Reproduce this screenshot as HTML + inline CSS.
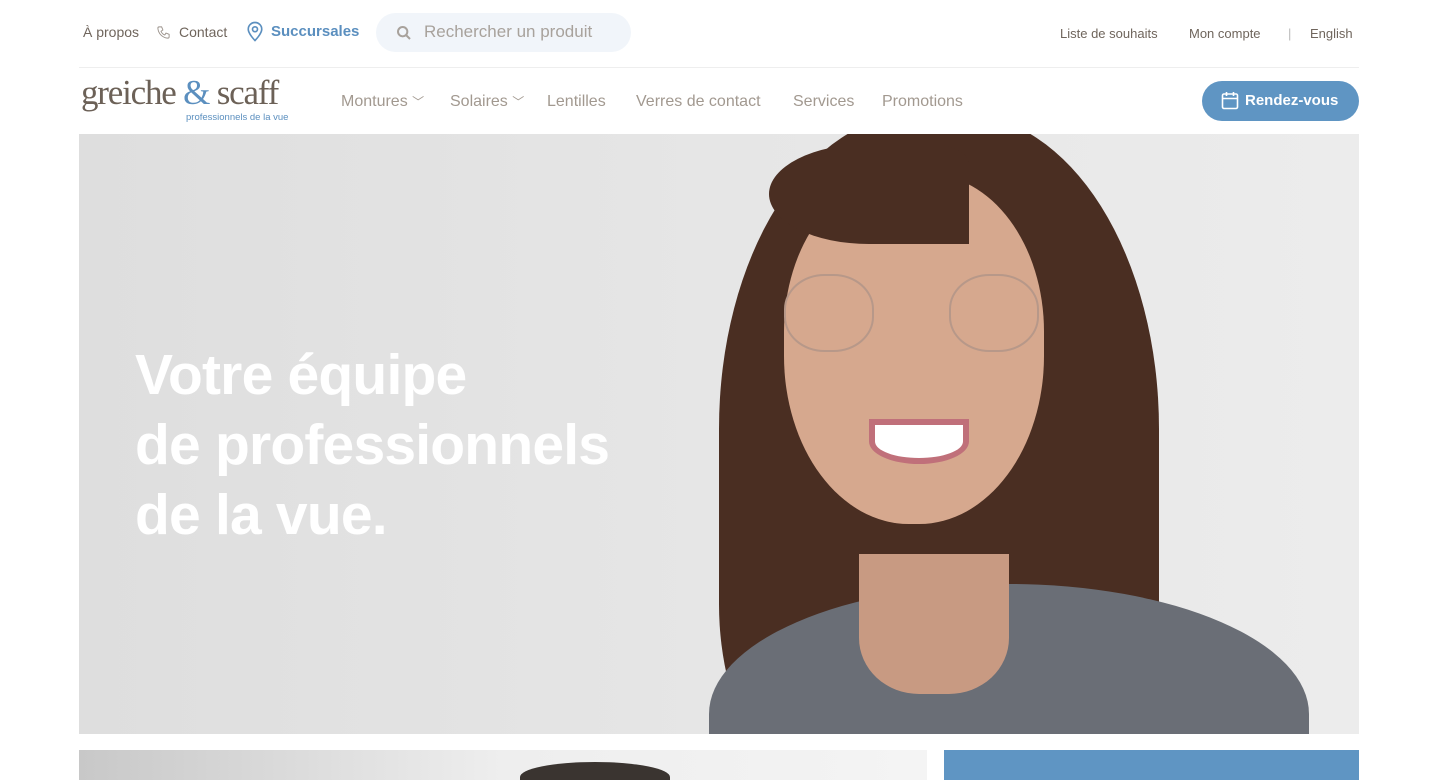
<!DOCTYPE html>
<html><head><meta charset="utf-8"><style>
*{margin:0;padding:0;box-sizing:border-box}
html,body{width:1439px;height:780px;overflow:hidden}
body{background:#fff;font-family:"Liberation Sans",sans-serif;color:#6f655c;position:relative}
.a{position:absolute;white-space:nowrap}
</style></head><body>
<div class="a" style="left:83px;top:24px;font-size:14px">À propos</div>
<svg class="a" style="left:156px;top:25px" width="15" height="15" viewBox="0 0 24 24" fill="none" stroke="#9a918a" stroke-width="1.5"><path d="M5 3h4l2 5-3 2a11 11 0 0 0 6 6l2-3 5 2v4a2 2 0 0 1-2 2A17 17 0 0 1 3 5a2 2 0 0 1 2-2z"/></svg>
<div class="a" style="left:179px;top:24px;font-size:14px">Contact</div>
<svg class="a" style="left:246px;top:21px" width="18" height="21" viewBox="0 0 24 28" fill="none" stroke="#5b8fbf" stroke-width="2.2"><path d="M12 26s-9-9-9-15a9 9 0 0 1 18 0c0 6-9 15-9 15z"/><circle cx="12" cy="11" r="3.3"/></svg>
<div class="a" style="left:271px;top:23px;font-size:15px;font-weight:bold;color:#5b8fbf">Succursales</div>
<div class="a" style="left:376px;top:13px;width:255px;height:39px;border-radius:20px;background:#f1f5fa"></div>
<svg class="a" style="left:396px;top:25px" width="16" height="16" viewBox="0 0 24 24" fill="none" stroke="#a8a29c" stroke-width="3"><circle cx="10" cy="10" r="7"/><path d="M15 15l6 6"/></svg>
<div class="a" style="left:424px;top:22px;font-size:17px;color:#a8a29c">Rechercher un produit</div>
<div class="a" style="left:1060px;top:26px;font-size:13px">Liste de souhaits</div>
<div class="a" style="left:1189px;top:26px;font-size:13px">Mon compte</div>
<div class="a" style="left:1288px;top:26px;font-size:13px;color:#bbb">|</div>
<div class="a" style="left:1310px;top:26px;font-size:13px">English</div>
<div class="a" style="left:79px;top:67px;width:1280px;height:1px;background:#eee"></div>
<div class="a" style="left:81px;top:73px;font-family:'Liberation Serif',serif;font-size:35px;color:#6c6157;letter-spacing:-1.2px">greiche <span style="color:#5b8fbf">&amp;</span> scaff</div>
<div class="a" style="left:186px;top:112px;font-size:9.5px;color:#5b8fbf">professionnels de la vue</div>
<div class="a" style="left:341px;top:93px;font-size:16px;color:#a29990">Montures <span style="font-size:12px">﹀</span></div>
<div class="a" style="left:450px;top:93px;font-size:16px;color:#a29990">Solaires <span style="font-size:12px">﹀</span></div>
<div class="a" style="left:547px;top:93px;font-size:16px;color:#a29990">Lentilles</div>
<div class="a" style="left:636px;top:93px;font-size:16px;color:#a29990">Verres de contact</div>
<div class="a" style="left:793px;top:93px;font-size:16px;color:#a29990">Services</div>
<div class="a" style="left:882px;top:93px;font-size:16px;color:#a29990">Promotions</div>
<div class="a" style="left:1202px;top:81px;width:157px;height:40px;border-radius:20px;background:#5f95c3"></div>
<svg class="a" style="left:1221px;top:91px" width="18" height="19" viewBox="0 0 18 19" fill="none" stroke="#fff" stroke-width="1.6"><rect x="1.5" y="3" width="15" height="14.5" rx="1.5"/><path d="M1.5 7.5h15M5.5 1v4M12.5 1v4"/></svg>
<div class="a" style="left:1245px;top:92px;font-size:15px;color:#fff;font-weight:bold">Rendez-vous</div>
<div class="a" style="left:79px;top:134px;width:1280px;height:600px;overflow:hidden;background:linear-gradient(90deg,#dedede,#e6e6e6 50%,#ececec)">
 <div class="a" style="left:640px;top:-20px;width:440px;height:700px;border-radius:45% 45% 30% 30%;background:#4a2e22"></div>
 <div class="a" style="left:630px;top:450px;width:600px;height:260px;border-radius:50% 50% 0 0;background:#6a6e76"></div>
 <div class="a" style="left:780px;top:420px;width:150px;height:140px;border-radius:0 0 40% 40%;background:#c89a82"></div>
 <div class="a" style="left:705px;top:40px;width:260px;height:350px;border-radius:45% 45% 48% 48%;background:#d6a88e"></div>
 <div class="a" style="left:690px;top:10px;width:200px;height:100px;border-radius:50% 20% 0 50%;background:#4a2e22"></div>
 <div class="a" style="left:705px;top:140px;width:90px;height:78px;border-radius:45%;border:2px solid #b79889"></div>
 <div class="a" style="left:870px;top:140px;width:90px;height:78px;border-radius:45%;border:2px solid #b79889"></div>
 <div class="a" style="left:790px;top:285px;width:100px;height:45px;border-radius:0 0 50% 50%;background:#fff;border:6px solid #c0707a"></div>
</div>
<div class="a" style="left:135px;top:340px;font-size:57px;font-weight:bold;color:#fff;line-height:70px;letter-spacing:-0.8px">Votre équipe<br>de professionnels<br>de la vue.</div>
<div class="a" style="left:79px;top:750px;width:848px;height:30px;overflow:hidden;background:linear-gradient(90deg,#c8c8c8,#eee 50%,#f4f4f4)"><div class="a" style="left:441px;top:12px;width:150px;height:30px;border-radius:50% 50% 0 0;background:#3a3430"></div></div>
<div class="a" style="left:944px;top:750px;width:415px;height:30px;background:#5f95c3"></div>
</body></html>
